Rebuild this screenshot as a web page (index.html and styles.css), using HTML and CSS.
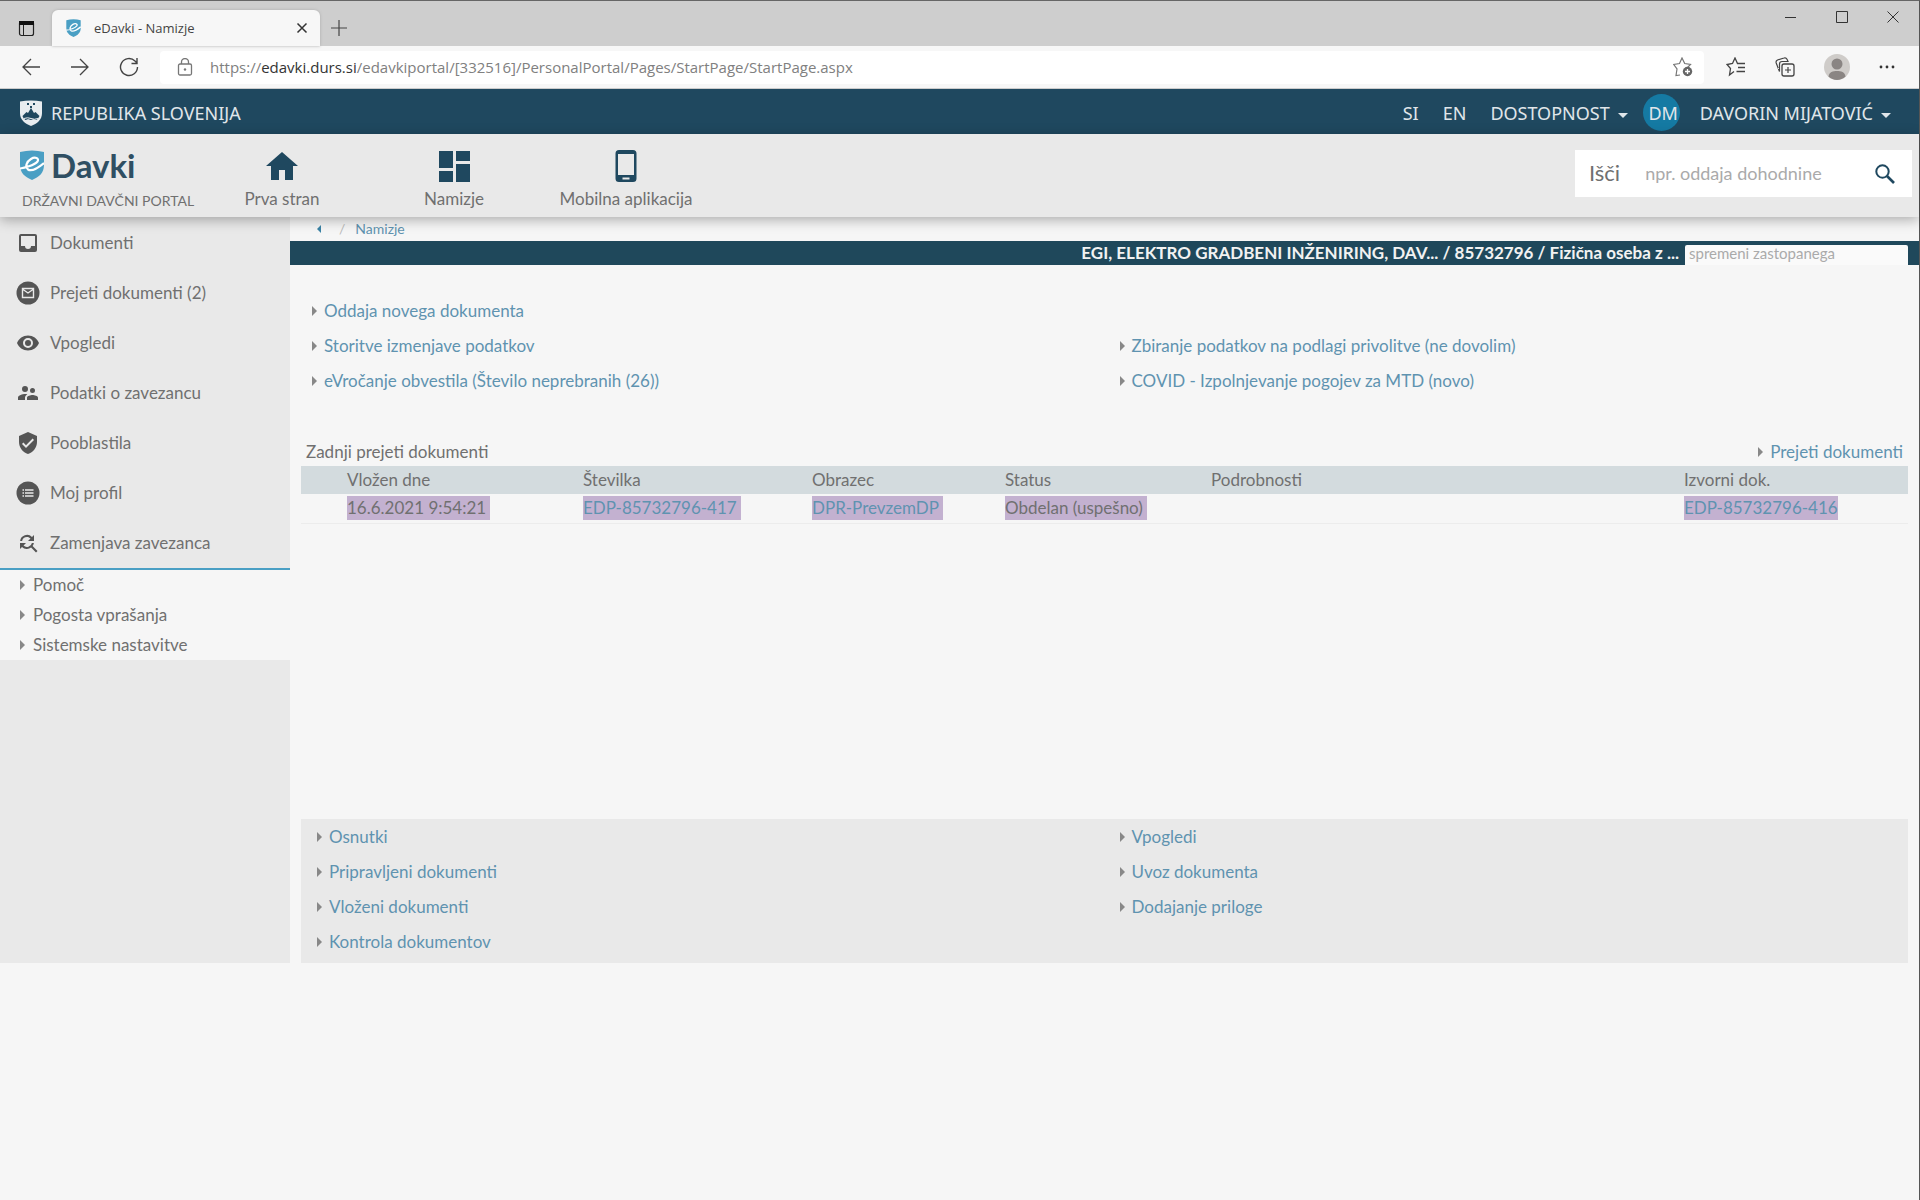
FILE: index.html
```html
<!DOCTYPE html>
<html lang="sl">
<head>
<meta charset="utf-8">
<title>eDavki - Namizje</title>
<link rel="stylesheet" href="styles.css">
</head>
<body>
<svg class="defs" aria-hidden="true">
  <symbol id="edavki" viewBox="0 0 24 30">
    <path fill="#4a9fc4" d="M0 2C8 0 16 0 24 2v13c0 8-5 12-12 15C5 27 0 23 0 15z"/>
    <path fill="none" stroke="#fff" stroke-width="2.200" d="M0 18.500C4 18 14 15.500 17.500 11.500C19.500 8 15 6.500 11 9C6 12 5 17 8 19.500C12 22 18 18 24 13"/>
  </symbol>
</svg>
<div class="window">
  <div class="tabstrip">
    <button class="plain tab-menu" aria-label="Meni zavihkov"><svg width="18" height="18" viewBox="0 0 18 18"><rect x="1.500" y="1.500" width="14" height="14" rx="2" fill="none" stroke="#222" stroke-width="1.200"/><path d="M1 1h15v4H1z" fill="#111"/><path d="M5.500 5v10" stroke="#222"/></svg></button>
    <div class="tab">
      <svg width="15" height="18"><use href="#edavki"/></svg>
      <span class="tab-title">eDavki - Namizje</span>
      <button class="plain" aria-label="Zapri zavihek"><svg width="12" height="12" viewBox="0 0 12 12"><path d="M1.500 1.500l9 9m0-9l-9 9" stroke="#333" stroke-width="1.500"/></svg></button>
    </div>
    <button class="plain new-tab" aria-label="Nov zavihek"><svg width="18" height="18" viewBox="0 0 18 18"><path d="M9 1v16M1 9h16" stroke="#444" stroke-width="1.200"/></svg></button>
    <div class="win-controls">
      <button class="plain" aria-label="Pomanjšaj"><svg width="12" height="12" viewBox="0 0 12 12"><path d="M0 6.500h11" stroke="#333"/></svg></button>
      <button class="plain" aria-label="Povečaj"><svg width="12" height="12" viewBox="0 0 12 12"><path d="M.5.500h11v11H.5z" fill="none" stroke="#333"/></svg></button>
      <button class="plain" aria-label="Zapri"><svg width="12" height="12" viewBox="0 0 12 12"><path d="M.5.500l11 11m0-11l-11 11" stroke="#333"/></svg></button>
    </div>
  </div>
  <div class="toolbar">
    <div class="nav-buttons">
      <button class="plain" aria-label="Nazaj"><svg width="20" height="20" viewBox="0 0 20 20"><path d="M19 10H2m8-8l-8 8 8 8" fill="none" stroke="#444" stroke-width="1.300"/></svg></button>
      <button class="plain" aria-label="Naprej"><svg width="20" height="20" viewBox="0 0 20 20"><path d="M1 10h17m-8-8l8 8-8 8" fill="none" stroke="#444" stroke-width="1.300"/></svg></button>
      <button class="plain" aria-label="Osveži"><svg width="20" height="20" viewBox="0 0 20 20"><path d="M18.500 10A8.500 8.500 0 1 1 16 4l1.500 1.500M18 1v5.500h-5.500" fill="none" stroke="#444" stroke-width="1.400"/></svg></button>
    </div>
    <div class="address">
      <svg width="16" height="18" viewBox="0 0 16 18"><rect x="1.500" y="6" width="13" height="11" rx="1.500" fill="none" stroke="#777" stroke-width="1.300"/><path d="M4.500 6V4a3.500 3.500 0 0 1 7 0v2" fill="none" stroke="#777" stroke-width="1.300"/><circle cx="8" cy="11.500" r="1.200" fill="#777"/></svg>
      <a class="url" href="#">https://<span class="domain">edavki.durs.si</span>/edavkiportal/[332516]/PersonalPortal/Pages/StartPage/StartPage.aspx</a>
      <button class="plain" aria-label="Dodaj med priljubljene"><svg width="20" height="20" viewBox="0 0 20 20"><path d="M7 18l-4 .5 1-6.500L.8 7.500l5.700-1L9 1l2.700 5.500 5.800 1-3 3" fill="none" stroke="#777" stroke-width="1.200"/><circle cx="14.500" cy="14.500" r="4.700" fill="#666"/><path d="M14.500 12v5M12 14.500h5" stroke="#fff" stroke-width="1.300"/></svg></button>
    </div>
    <div class="browser-actions">
      <button class="plain" aria-label="Priljubljene"><svg width="20" height="20" viewBox="0 0 20 20"><path d="M8 14.500l-4.500 3.500 1-6.500L1 7.500l5.500-1L9 1l2.500 5.500H19M12 10.500h7M10.500 14.500H19" fill="none" stroke="#444" stroke-width="1.300"/></svg></button>
      <button class="plain" aria-label="Zbirke"><svg width="20" height="20" viewBox="0 0 20 20"><rect x="7" y="7" width="12" height="12" rx="2" fill="none" stroke="#444" stroke-width="1.300"/><path d="M13 10v6M10 13h6M4.500 14.500L1.200 6c-.5-1.500.3-2.500 1.300-3l6.500-2c1.500-.5 2.500.2 3 1.200L13 4.500H7Q4.500 4.500 4.500 7z" fill="none" stroke="#444" stroke-width="1.200"/></svg></button>
      <button class="plain" aria-label="Profil"><svg width="26" height="26" viewBox="0 0 26 26"><circle cx="13" cy="13" r="13" fill="#cfccc9"/><circle cx="13" cy="10" r="5.500" fill="#8a8583"/><path d="M4.500 22.500C5 18 9 17 13 17s8 1 8.500 5.500C17 27 9 27 4.500 22.500z" fill="#8a8583"/></svg></button>
      <button class="plain" aria-label="Več"><svg width="16" height="4" viewBox="0 0 16 4"><circle cx="2" cy="2" r="1.400" fill="#333"/><circle cx="8" cy="2" r="1.400" fill="#333"/><circle cx="14" cy="2" r="1.400" fill="#333"/></svg></button>
    </div>
  </div>
  <header class="gov">
    <a class="gov-brand" href="#"><svg width="22" height="26" viewBox="0 0 22 26"><path fill="#e9edf0" d="M0 1.500C7 0 15 0 22 1.500V13c0 7-5 10.500-11 13C5 23.500 0 20 0 13z"/><path fill="#1f485f" d="M2.500 16l4-4 1.500 1 3-5 3 5 1.500-1 4 4c-1 2-2 3-3 4-3-1-3-1-5.500 0-3-1-3-1-5.500 0-1-1-2.500-2-3-4zM7 3h2v2H7zm6 0h2v2h-2zm-3 3h2v2h-2z"/><path d="M4 18.500q3.500-1.500 7 0t7 0M6 21q2.500-1 5 0t5 0" fill="none" stroke="#e9edf0"/></svg>REPUBLIKA SLOVENIJA</a>
    <nav class="gov-nav">
      <a href="#">SI</a><a href="#">EN</a><a class="drop" href="#">DOSTOPNOST</a>
      <a class="user" href="#"><span class="avatar">DM</span><span class="drop">DAVORIN MIJATOVIĆ</span></a>
    </nav>
  </header>
  <header class="site">
    <a class="brand" href="#"><span class="brand-name"><svg width="24" height="30"><use href="#edavki"/></svg>Davki</span><span class="brand-sub">DRŽAVNI DAVČNI PORTAL</span></a>
    <nav class="main-nav">
      <a href="#"><svg width="32" height="32" viewBox="0 0 32 32"><path fill="#1f485f" d="M16 2L0 16h5v14h8V20h6v10h8V16h5z"/></svg>Prva stran</a>
      <a href="#"><svg width="32" height="32" viewBox="0 0 32 32"><path fill="#1f485f" d="M1 1h14v17H1zm17 0h14v10H18zM1 21h14v11H1zm17-7h14v18H18z"/></svg>Namizje</a>
      <a href="#"><svg width="32" height="32" viewBox="0 0 32 32"><path fill="#1f485f" fill-rule="evenodd" d="M9 0h14a3.500 3.500 0 0 1 3.500 3.500v25A3.500 3.500 0 0 1 23 32H9a3.500 3.500 0 0 1-3.500-3.500v-25A3.500 3.500 0 0 1 9 0zM8 4v21h16V4zm4.500 23.500v2h7v-2z"/></svg>Mobilna aplikacija</a>
    </nav>
    <form class="search">
      <label for="q">Išči</label>
      <input id="q" type="text" placeholder="npr. oddaja dohodnine">
      <button class="plain" type="button" aria-label="Išči"><svg width="20" height="20" viewBox="0 0 20 20"><circle cx="7.500" cy="7.500" r="6.200" fill="none" stroke="#1f485f" stroke-width="2"/><path d="M12 12l7 7" stroke="#1f485f" stroke-width="2.600"/></svg></button>
    </form>
  </header>
  <div class="columns">
    <aside class="sidebar">
      <nav class="side-main">
        <a href="#"><svg width="24" height="24" viewBox="0 0 24 24"><path fill="#555" fill-rule="evenodd" d="M5 3h14a2 2 0 0 1 2 2v14a2 2 0 0 1-2 2H5a2 2 0 0 1-2-2V5a2 2 0 0 1 2-2zm0 2v10h4a3 3 0 0 0 6 0h4V5z"/></svg>Dokumenti</a>
        <a href="#"><svg width="24" height="24" viewBox="0 0 24 24"><circle cx="12" cy="12" r="11.500" fill="#555"/><path d="M6.500 7.500h11v9h-11zM7 8.500l5 3.500 5-3.500" fill="none" stroke="#e9e9e9" stroke-width="1.400"/></svg>Prejeti dokumenti (2)</a>
        <a href="#"><svg width="24" height="24" viewBox="0 0 24 24"><path fill="#555" d="M12 4.500C7 4.500 2.700 7.600 1 12c1.700 4.400 6 7.500 11 7.500s9.300-3.100 11-7.500c-1.700-4.400-6-7.500-11-7.500zM12 17a5 5 0 1 1 0-10 5 5 0 0 1 0 10zm0-8a3 3 0 1 0 0 6 3 3 0 0 0 0-6z"/></svg>Vpogledi</a>
        <a href="#"><svg width="24" height="24" viewBox="0 0 24 24"><path fill="#555" d="M16.500 12a2.500 2.500 0 1 0 0-5 2.500 2.500 0 0 0 0 5zM9 11a3 3 0 1 0 0-6 3 3 0 0 0 0 6zm7.500 3c-1.800 0-5.500.9-5.500 2.700V19h11v-2.300c0-1.800-3.700-2.700-5.500-2.700zM9 13c-2.300 0-7 1.200-7 3.500V19h7v-2.300c0-.8.300-2.300 2.400-3.500C10.500 13 9.700 13 9 13z"/></svg>Podatki o zavezancu</a>
        <a href="#"><svg width="24" height="24" viewBox="0 0 24 24"><path fill="#555" d="M12 1L3 5v6c0 5.500 3.800 10.700 9 12 5.200-1.300 9-6.500 9-12V5zm-2 16l-4-4 1.400-1.400L10 14.200l6.600-6.600L18 9z"/></svg>Pooblastila</a>
        <a href="#"><svg width="24" height="24" viewBox="0 0 24 24"><circle cx="12" cy="12" r="11.500" fill="#555"/><path d="M6.500 9h1.500m1 0h8.500m-11 3H8m1 0h8.500m-11 3H8m1 0h8.500" stroke="#e9e9e9" stroke-width="1.600"/></svg>Moj profil</a>
        <a href="#"><svg width="24" height="24" viewBox="0 0 24 24"><path fill="#555" d="M11 6c1.400 0 2.600.6 3.500 1.500L12 10h6V4l-2 2a7 7 0 0 0-11.900 4h2A5 5 0 0 1 11 6zm5.600 9.100c.7-.9 1.200-2 1.300-3.100h-2a5 5 0 0 1-8.400 2.500L10 12H4v6l2-2a7 7 0 0 0 9.100.6L20 21.500l1.500-1.500z"/></svg>Zamenjava zavezanca</a>
      </nav>
      <nav class="side-help"><a class="arrow" href="#">Pomoč</a><a class="arrow" href="#">Pogosta vprašanja</a><a class="arrow" href="#">Sistemske nastavitve</a></nav>
    </aside>
    <main>
      <nav class="crumbs" aria-label="Drobtinice"><a class="back" href="#" aria-label="Nazaj"></a><span>/</span><a href="#">Namizje</a></nav>
      <div class="client"><label for="client">EGI, ELEKTRO GRADBENI INŽENIRING, DAV... / 85732796 / Fizična oseba z ...</label><input id="client" type="text" placeholder="spremeni zastopanega"></div>
      <div class="content">
        <section class="links top-links">
          <div><a class="arrow" href="#">Oddaja novega dokumenta</a><a class="arrow" href="#">Storitve izmenjave podatkov</a><a class="arrow" href="#">eVročanje obvestila (Število neprebranih (26))</a></div>
          <div><a class="arrow" href="#">Zbiranje podatkov na podlagi privolitve (ne dovolim)</a><a class="arrow" href="#">COVID - Izpolnjevanje pogojev za MTD (novo)</a></div>
        </section>
        <section class="recent">
          <div class="recent-head"><h2>Zadnji prejeti dokumenti</h2><a class="arrow" href="#">Prejeti dokumenti</a></div>
          <table>
            <colgroup><col class="c-pad"><col class="c-date"><col class="c-num"><col class="c-form"><col class="c-status"><col class="c-detail"><col class="c-src"></colgroup>
            <thead><tr><th></th><th>Vložen dne</th><th>Številka</th><th>Obrazec</th><th>Status</th><th>Podrobnosti</th><th>Izvorni dok.</th></tr></thead>
            <tbody><tr><td></td><td><span class="sel more">16.6.2021 9:54:21</span></td><td><a class="sel more" href="#">EDP-85732796-417</a></td><td><a class="sel more" href="#">DPR-PrevzemDP</a></td><td><span class="sel more">Obdelan (uspešno)</span></td><td></td><td><a class="sel" href="#">EDP-85732796-416</a></td></tr></tbody>
          </table>
        </section>
        <section class="links bottom-links">
          <div><a class="arrow" href="#">Osnutki</a><a class="arrow" href="#">Pripravljeni dokumenti</a><a class="arrow" href="#">Vloženi dokumenti</a><a class="arrow" href="#">Kontrola dokumentov</a></div>
          <div><a class="arrow" href="#">Vpogledi</a><a class="arrow" href="#">Uvoz dokumenta</a><a class="arrow" href="#">Dodajanje priloge</a></div>
        </section>
      </div>
    </main>
  </div>
</div>
</body>
</html>
```

FILE: styles.css
```css
* { box-sizing: border-box; }
body { margin: 0; background: #f6f6f6; color: #707070; font: 17px/24px Lato, sans-serif; }
a { color: inherit; text-decoration: none; }
svg { display: block; flex: none; }
.defs { position: absolute; width: 0; height: 0; }
.plain { border: 0; padding: 0; background: none; display: flex; align-items: center; justify-content: center; }
.window { min-height: 100vh; border-top: 1px solid #666; border-right: 1px solid #555; }

.tabstrip { height: 45px; background: #cecece; display: flex; }
.tab-menu { width: 52px; padding: 10px 0 0 2px; }
.tab { width: 268px; margin-top: 9px; padding: 0 12px 0 14px; display: flex; align-items: center; background: #f7f7f7; border-radius: 6px 6px 0 0; box-shadow: 0 0 3px #aaa; }
.tab-title { flex: 1; margin-left: 13px; font: 13px/18px "Open Sans", sans-serif; color: #444; }
.new-tab { width: 38px; padding-top: 9px; }
.win-controls { margin-left: auto; padding: 10px 20px 0 0; display: flex; align-items: flex-start; gap: 39px; }

.toolbar { height: 43px; background: #f7f7f7; border-bottom: 1px solid #ccc; display: flex; align-items: center; padding: 0 24px 0 21px; }
.nav-buttons { display: flex; gap: 29px; margin-right: 21px; }
.address { flex: 1; height: 33px; display: flex; align-items: center; gap: 17px; padding: 0 11px 0 17px; background: #fff; border-radius: 4px; }
.url { flex: 1; font: 15px/20px "Open Sans", sans-serif; color: #808080; }
.domain { color: #333; }
.browser-actions { display: flex; align-items: center; gap: 29px; margin-left: 22px; }

.gov { height: 45px; background: #1f485f; color: #e0e6ea; display: flex; justify-content: space-between; align-items: center; padding: 2px 28px 0 20px; font: 18px/24px "Noto Sans", sans-serif; }
.gov-brand { display: flex; align-items: center; gap: 9px; }
.gov-nav { display: flex; align-items: center; gap: 24px; }
.drop { display: flex; align-items: center; gap: 8px; }
.drop::after { content: ""; border: 5px solid transparent; border-top-color: currentColor; border-bottom: 0; margin-top: 6px; }
.user { display: flex; align-items: center; gap: 20px; margin-left: -9px; }
.avatar { width: 37px; height: 37px; padding-left: 4px; border-radius: 50%; background: #157aa3; display: grid; place-items: center; }

.site { position: relative; height: 83px; background: #e9e9e9; box-shadow: 0 3px 12px rgba(0, 0, 0, .3); display: flex; padding: 0 7px 0 20px; }
.brand { width: 176px; padding-top: 15px; }
.brand-name { display: flex; align-items: center; gap: 7px; height: 32px; font-size: 33px; font-weight: 700; color: #2f4f63; }
.brand-sub { display: block; margin: 8px 0 0 2px; font-size: 14px; }
.main-nav { display: flex; }
.main-nav a { width: 172px; padding-top: 16px; display: flex; flex-direction: column; align-items: center; gap: 5px; }
.search { width: 337px; height: 47px; margin: 16px 0 0 auto; padding: 0 17px 0 14px; background: #fff; display: flex; align-items: center; }
.search label { font-size: 22px; padding-bottom: 2px; }
input { border: 0; outline: 0; background: none; min-width: 0; font: inherit; color: #555; }
::placeholder { color: #aaa; opacity: 1; }
.search input { flex: 1; margin-left: 25px; padding: 0 0 2px; font-size: 18px; }

.columns { display: flex; }
.sidebar { width: 290px; flex: none; background: #e9e9e9; }
.side-main { padding-top: 1px; border-bottom: 2px solid #4a9fc4; }
.side-main a { display: flex; align-items: center; gap: 10px; height: 50px; padding-left: 16px; }
.side-help { background: #f6f6f6; display: flex; flex-direction: column; gap: 6px; padding: 3px 0 3px 20px; }
.arrow { display: flex; align-items: center; gap: 7px; }
.arrow::before { content: ""; border: 5px solid transparent; border-left-color: #888; border-right: 0; }
.side-help .arrow { gap: 8px; }

main { flex: 1; min-width: 0; }
.crumbs { height: 24px; padding-left: 27px; display: flex; align-items: center; gap: 10px; font-size: 14px; color: #bbb; }
.crumbs a, .links a, .recent a { color: #5f93b0; }
.crumbs .back { border: 4px solid transparent; border-right-color: #3a83a6; border-left: 0; margin-right: 8px; }
.client { height: 24px; padding: 0 11px 0 0; background: #1f485b; display: flex; justify-content: flex-end; gap: 6px; color: #f2f2f2; font-weight: 700; }
.client input { width: 223px; height: 20px; align-self: flex-end; padding: 0 4px 4px; background: #fafafa; border-radius: 2px 2px 0 0; font-weight: 400; font-size: 15px; line-height: 16px; }
.content { padding: 0 11px; }
.links { display: grid; grid-template-columns: 1fr 1fr; column-gap: 30px; }
.links a { height: 35px; width: max-content; }
.top-links { padding: 28px 11px 0 11px; align-items: end; }
.recent { margin-top: 42px; height: 379px; }
.recent-head { display: flex; justify-content: space-between; padding: 0 5px; }
h2 { margin: 0; font: inherit; }
table { width: 100%; margin-top: 2px; table-layout: fixed; border-collapse: collapse; }
th, td { padding: 0; text-align: left; font-weight: 400; white-space: nowrap; }
th { height: 28px; background: #d3dbde; }
td { height: 29px; border-bottom: 1px solid #ececec; }
.c-pad { width: 46px; }
.c-date { width: 236px; }
.c-num { width: 229px; }
.c-form { width: 193px; }
.c-status { width: 206px; }
.c-src { width: 224px; }
.sel { display: inline-block; background: #c3b1d0; }
.more { padding-right: 4px; }
.bottom-links { background: #e9e9e9; min-height: 144px; padding: 0 16px; }
```
